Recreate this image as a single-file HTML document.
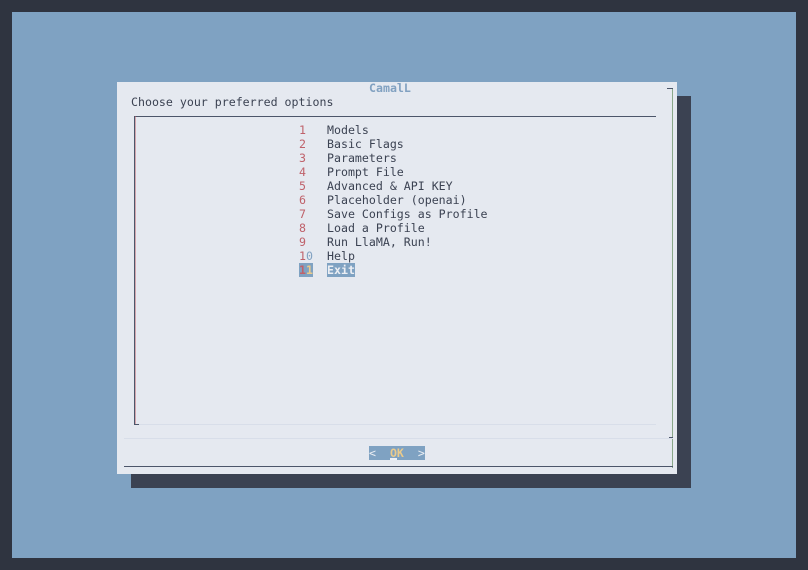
<!DOCTYPE html>
<html><head><style>
body{margin:0;width:808px;height:570px;background:#2f3440;position:relative;overflow:hidden;font-family:"DejaVu Sans Mono","Liberation Mono",monospace;font-size:11.6px;line-height:14px;color:#3b4252}
div,span{position:absolute;white-space:pre}
</style></head><body>
<div style="left:12px;top:12px;width:784px;height:546px;background:#7fa2c2"></div>
<div style="left:131px;top:96px;width:560px;height:392px;background:#3b4252"></div>
<div style="left:117px;top:82px;width:560px;height:392px;background:#e5e9f0"></div>
<div style="left:672px;top:88px;width:1px;height:380px;background:#8aa88a"></div>
<div style="left:667px;top:88px;width:6px;height:1px;background:#4c566a"></div>
<div style="left:124px;top:466px;width:549px;height:1px;background:#4c566a"></div>
<div style="left:369px;top:81px;font-weight:bold;color:#81a1c1">CamalL</div>
<div style="left:131px;top:95px">Choose your preferred options</div>
<div style="left:134px;top:116px;width:522px;height:1px;background:#4c566a"></div>
<div style="left:134px;top:116px;width:1px;height:308px;background:#4c566a"></div>
<div style="left:135px;top:116px;width:1px;height:308px;background:#bf616a;opacity:.5"></div>
<div style="left:134px;top:424px;width:5px;height:1px;background:#4c566a"></div>
<div style="left:139px;top:424px;width:517px;height:1px;background:#d8dee9"></div>
<div style="left:124px;top:438px;width:549px;height:1px;background:#d8dee9"></div>
<div style="left:669px;top:437px;width:4px;height:1px;background:#4c566a"></div>
<div style="left:299px;top:123px;color:#bf616a">1
2
3
4
5
6
7
8
9
1<span style="position:static;color:#81a1c1">0</span></div>
<div style="left:327px;top:123px">Models
Basic Flags
Parameters
Prompt File
Advanced &amp; API KEY
Placeholder (openai)
Save Configs as Profile
Load a Profile
Run LlaMA, Run!
Help</div>
<div style="left:299px;top:263px;width:14px;height:14px;background:#7fa2c2"></div>
<div style="left:299px;top:263px;color:#bf616a;font-weight:bold">1<span style="position:static;color:#ebcb8b">1</span></div>
<div style="left:327px;top:263px;width:28px;height:14px;background:#7fa2c2"></div>
<div style="left:327px;top:263px;color:#eceff4;font-weight:bold">Exit</div>
<div style="left:369px;top:446px;width:56px;height:14px;background:#7fa2c2"></div>
<div style="left:369px;top:446px;color:#eceff4">&lt;  <span style="position:static;color:#ebcb8b;font-weight:bold">OK</span>  &gt;</div>
<div style="left:390px;top:458px;width:7px;height:2px;background:#eceff4"></div>
</body></html>
